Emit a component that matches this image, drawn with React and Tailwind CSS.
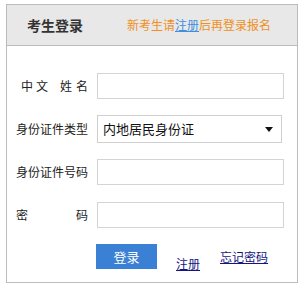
import React from "react";

const font = { fontFamily: '"Microsoft YaHei","Noto Sans CJK SC","Noto Sans",sans-serif' };

function Label({ children }) {
  return (
    <div className="w-[73px] shrink-0 whitespace-nowrap text-[12px] text-[#222] leading-none flex items-center">
      {children}
    </div>
  );
}

export default function App() {
  return (
    <div className="w-[304px] h-[290px] bg-white relative" style={font}>
      <div className="absolute left-[6px] top-[4px] w-[292px] h-[279px] border border-[#bcbcbc] flex flex-col">
        <div className="h-[41px] bg-[#e8e8e8] border-b border-[#bcbcbc] flex items-center">
          <div className="ml-[20px] text-[14px] font-bold text-[#333]">考生登录</div>
          <div className="ml-[44px] text-[12px] text-[#f0901e] whitespace-nowrap">
            新考生请<span className="text-[#3f8fe0] underline">注册</span>后再登录报名
          </div>
        </div>
        <div className="flex flex-col pl-[9px]">
          <div className="flex items-center mt-[27px] h-[26px]">
            <Label>
              <span className="flex w-full pl-[5px] pr-[1px] justify-between">
                <span className="flex gap-[3px]"><span>中</span><span>文</span></span>
                <span className="flex gap-[4px]"><span>姓</span><span>名</span></span>
              </span>
            </Label>
            <div className="ml-[8px] w-[187px] h-[26px] border border-[#d4d4d4]" />
          </div>
          <div className="flex items-center mt-[16px] h-[28px]">
            <Label><span>身份证件类型</span></Label>
            <div className="ml-[8px] w-[185px] h-[28px] border border-[#cfcfcf] flex items-center pl-[5px] pr-[8px] justify-between">
              <span className="text-[13px] text-[#111] whitespace-nowrap">内地居民身份证</span>
              <svg width="8" height="5" viewBox="0 0 8 5"><path d="M0 0H8L4 5Z" fill="#111" /></svg>
            </div>
          </div>
          <div className="flex items-center mt-[16px] h-[26px]">
            <Label><span>身份证件号码</span></Label>
            <div className="ml-[8px] w-[187px] h-[26px] border border-[#d4d4d4]" />
          </div>
          <div className="flex items-center mt-[17px] h-[26px]">
            <Label>
              <span className="flex w-full justify-between pr-[1px]"><span>密</span><span>码</span></span>
            </Label>
            <div className="ml-[8px] w-[187px] h-[26px] border border-[#d4d4d4]" />
          </div>
          <div className="flex mt-[16px] ml-[80px]">
            <div className="w-[61px] h-[25px] bg-[#3a80d5] text-white text-[13px] flex items-center justify-center">登录</div>
            <a className="ml-[19px] mt-[14px] text-[12px] text-[#151580] underline leading-none">注册</a>
            <a className="ml-[20px] mt-[7px] text-[12px] text-[#151580] underline leading-none">忘记密码</a>
          </div>
        </div>
      </div>
    </div>
  );
}
